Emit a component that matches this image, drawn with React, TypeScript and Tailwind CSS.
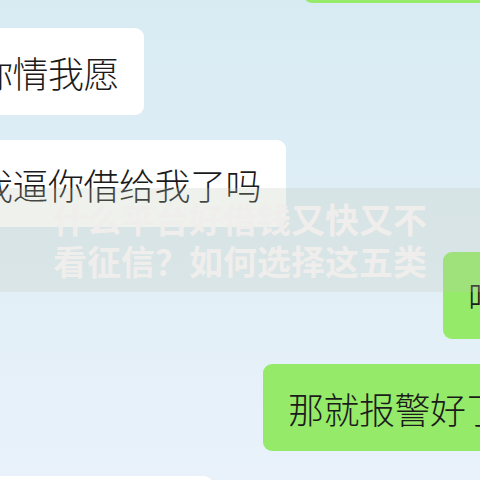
const font = { fontFamily: '"Noto Sans CJK SC", "Noto Sans", sans-serif' };

function Left({ text }: { text: string }) {
  return (
    <div className="flex justify-start">
      <div className="ml-[-48px] flex h-[87px] items-center whitespace-nowrap rounded-[9px] bg-white px-[25px] text-[36px] font-light tracking-[-0.5px] text-[#1b1b1b]">
        {text}
      </div>
    </div>
  );
}

function Right({ text, left }: { text: string; left: string }) {
  return (
    <div className="relative h-[87px]">
      <div
        className={`absolute top-0 h-[87px] w-[320px] rounded-[9px] bg-[#95ea69] ${left}`}
      >
        <div className="flex h-full items-center whitespace-nowrap px-[25px] text-[36px] font-light tracking-[-0.5px] text-[#1b1b1b]">
          {text}
        </div>
      </div>
    </div>
  );
}

export default function App() {
  return (
    <div
      className="relative h-[480px] w-[480px] overflow-hidden bg-gradient-to-b from-[#d8ebf3] to-[#e9f2fa]"
      style={font}
    >
      <div className="mt-[-84px] flex flex-col gap-[25px]">
        <Right text="" left="left-[303px]" />
        <Left text="你情我愿" />
        <Left text="我逼你借给我了吗" />
        <Right text="吗" left="left-[443px]" />
        <Right text="那就报警好了" left="left-[263px]" />
        <div className="flex justify-start">
          <div className="ml-[-20px] h-[87px] w-[233px] rounded-[9px] bg-white" />
        </div>
      </div>
      <div className="absolute left-0 top-[188px] flex h-[104px] w-full flex-col items-center justify-center bg-[rgba(190,200,180,0.25)] text-[34px] font-bold leading-[42px] text-[#f0eeec]">
        <div>什么平台好借钱又快又不</div>
        <div>看征信？如何选择这五类</div>
      </div>
    </div>
  );
}
